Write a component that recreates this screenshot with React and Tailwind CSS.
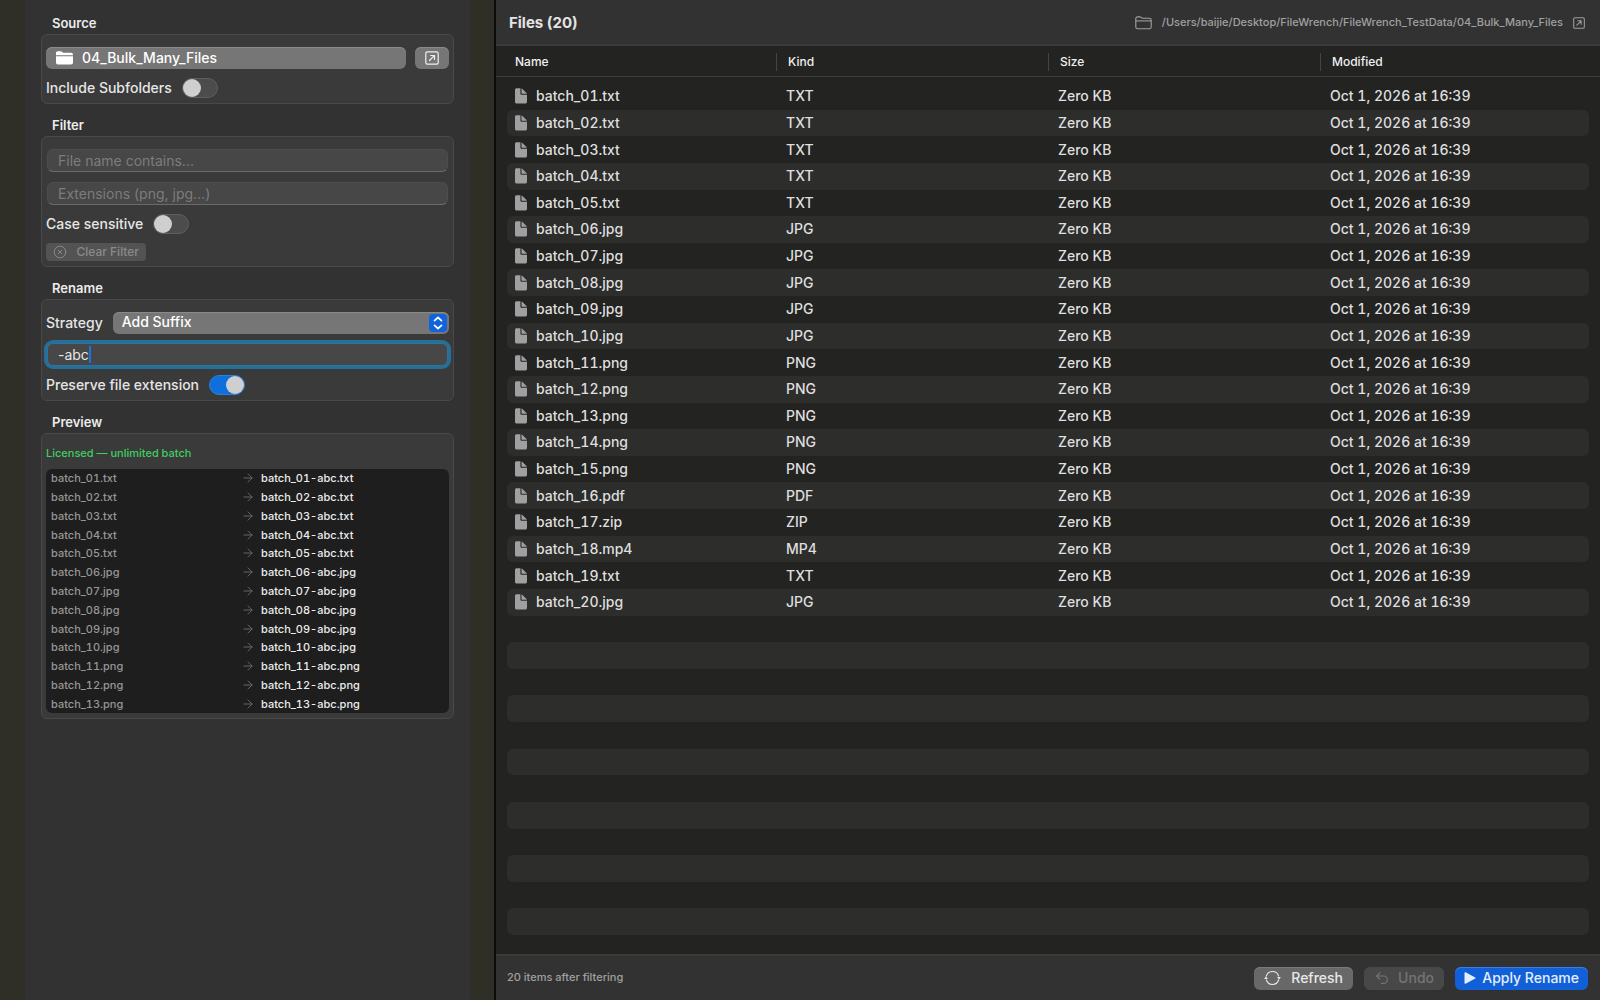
import React, { useState } from "react";
import { ArrowRight, Undo2, CircleX } from "lucide-react";

const exts = [
  "txt", "txt", "txt", "txt", "txt",
  "jpg", "jpg", "jpg", "jpg", "jpg",
  "png", "png", "png", "png", "png",
  "pdf", "zip", "mp4", "txt", "jpg",
];

const files = exts.map((ext, i) => ({
  base: "batch_" + String(i + 1).padStart(2, "0"),
  ext,
  size: "Zero KB",
  modified: "Oct 1, 2026 at 16:39",
}));

// empty striped rows under the list
const emptyRows = Array.from({ length: 12 });

function FolderFill() {
  return (
    <svg width="17" height="14" viewBox="0 0 17 14" fill="currentColor">
      <path d="M0 4.2V2.2C0 1 .8.3 2 .3h2.6c.7 0 1.1.2 1.6.6l.6.5c.4.3.7.4 1.2.4H15c1.2 0 2 .8 2 2v.4H0z" />
      <path d="M0 5.2h17v6.2c0 1.3-.8 2-2 2H2c-1.2 0-2-.7-2-2z" />
    </svg>
  );
}

function FolderLine() {
  return (
    <svg width="17" height="14" viewBox="0 0 17 14" fill="none" stroke="currentColor" strokeWidth="1.1">
      <path d="M.8 11V2.6C.8 1.5 1.4.9 2.5.9h2.2c.6 0 1 .1 1.4.5l.5.4c.4.3.7.4 1.2.4h6.6c1.1 0 1.8.6 1.8 1.7V11c0 1.1-.7 1.8-1.8 1.8h-12C1.4 12.8.8 12.1.8 11z" />
      <path d="M.8 4.9h15.400" />
    </svg>
  );
}

function OpenIcon({ size }) {
  return (
    <svg width={size} height={size} viewBox="0 0 14 14" fill="none" stroke="currentColor" strokeWidth="1.2">
      <rect x=".8" y=".8" width="12.4" height="12.4" rx="1.6" />
      <path d="M4.5 9.5l4.800-4.800M5.600 4.500h3.900v3.900" strokeLinecap="round" strokeLinejoin="round" />
    </svg>
  );
}

function FileIcon() {
  return (
    <svg width="12" height="16" viewBox="0 0 12 16" fill="#a0a0a0">
      <path d="M1.8.3h3.600v5c0 1 .5 1.500 1.500 1.500H12v6.900c0 1.200-.6 1.800-1.800 1.800H1.800C.6 15.500 0 14.900 0 13.700V2.100C0 .9.6.3 1.800.3z" />
      <path d="M6.500.4c.4.1.8.4 1.200.8l3.300 3.300c.4.4.7.8.8 1.200H7.100c-.4 0-.6-.2-.6-.6z" />
    </svg>
  );
}

function RefreshIcon() {
  return (
    <svg width="17" height="16" viewBox="0 0 17 16" fill="none" stroke="currentColor" strokeWidth="1.1" strokeLinecap="round">
      <path d="M2.400 6a6.400 6.400 0 0 1 12.200 0M14.600 10a6.400 6.400 0 0 1-12.200 0" />
      <path d="M.1 8.900L2 6.300l1.900 2.600zM13.100 7.100L15 9.700l1.900-2.600z" fill="currentColor" stroke="none" />
    </svg>
  );
}

function UpDownIcon() {
  return (
    <svg width="10" height="14" viewBox="0 0 10 14" fill="none" stroke="currentColor" strokeWidth="1.7" strokeLinecap="round" strokeLinejoin="round">
      <path d="M1.500 4.700L5 1.500l3.500 3.200M1.500 9.300L5 12.500l3.500-3.200" />
    </svg>
  );
}

function Group({ title, children }) {
  return (
    <section className="flex flex-col gap-[3px]">
      <h2 className="pl-[11px] text-[13px] leading-4 font-semibold text-[#ececec]">{title}</h2>
      <div className="flex flex-col gap-[9px] rounded-md border border-[#494949] bg-[#3a3a3a] px-1 pt-3 pb-[5px]">
        {children}
      </div>
    </section>
  );
}

function Toggle({ label, checked, onChange }) {
  return (
    <label className="flex h-5 items-center gap-[10px] self-start text-[#e6e6e6]">
      {label}
      <input
        type="checkbox"
        role="switch"
        checked={checked}
        onChange={(e) => onChange(e.target.checked)}
        className="flex h-5 w-9 appearance-none items-center rounded-full border border-[#5e5e5e] bg-[#4c4c4c] before:block before:size-[18px] before:rounded-full before:bg-[#cfcfcf] checked:justify-end checked:border-[#2f80d8] checked:bg-[#0f6fdc]"
      />
    </label>
  );
}

const fieldClass =
  "block h-[23px] w-full rounded-md border px-[10px] bg-[#474747] font-normal text-[#e6e6e6] placeholder:text-[#7c7c7c] outline-none";
const fieldIdle = " border-[#4d4d4d] border-b-[#6a6a6a]";
const fieldFocus = " border-[#2a759f] ring-[3px] ring-[#266f99]";

export default function App() {
  const [subfolders, setSubfolders] = useState(false);
  const [nameFilter, setNameFilter] = useState("");
  const [extFilter, setExtFilter] = useState("");
  const [caseSensitive, setCaseSensitive] = useState(false);
  const [suffix, setSuffix] = useState("-abc");
  const [keepExt, setKeepExt] = useState(true);

  const renamed = (f) => (keepExt ? f.base + suffix + "." + f.ext : f.base + "." + f.ext + suffix);

  return (
    <div className="flex h-screen bg-[#232321] font-['Inter',sans-serif] text-sm text-[#dfdfdf]">
      {/* SIDEBAR */}
      <aside className="w-[496px] shrink-0 border-r-2 border-[#0c0c0c] bg-[#302f27] pr-6 pl-[25px] font-medium">
        <div className="flex h-full flex-col gap-[13px] bg-[#323232] px-4 pt-[15px]">
          <Group title="Source">
            <div className="flex gap-[9px]">
              <button className="flex h-[22px] flex-1 items-center gap-[9px] rounded-md bg-[#767676] px-[10px] text-white inset-shadow-[0_1px_#8a8a8a]">
                <FolderFill />
                04_Bulk_Many_Files
              </button>
              <button aria-label="Open folder" className="flex h-[22px] w-[34px] items-center justify-center rounded-md bg-[#767676] text-[#f0f0f0] inset-shadow-[0_1px_#8a8a8a]">
                <OpenIcon size={14} />
              </button>
            </div>
            <Toggle label="Include Subfolders" checked={subfolders} onChange={setSubfolders} />
          </Group>

          <Group title="Filter">
            <div className="flex flex-col gap-[10px] px-px">
              <input aria-label="File name contains" placeholder="File name contains..." value={nameFilter} onChange={(e) => setNameFilter(e.target.value)} className={fieldClass + fieldIdle} />
              <input aria-label="Extensions" placeholder="Extensions (png, jpg...)" value={extFilter} onChange={(e) => setExtFilter(e.target.value)} className={fieldClass + fieldIdle} />
            </div>
            <Toggle label="Case sensitive" checked={caseSensitive} onChange={setCaseSensitive} />
            <button disabled className="flex h-[18px] w-[100px] items-center justify-between self-start rounded bg-[#535353] px-[7px] text-xs text-[#8a8a8a]">
              <CircleX size={14} strokeWidth={1.6} />
              Clear Filter
            </button>
          </Group>

          <Group title="Rename">
            <div className="flex items-center gap-[10px]">
              <label htmlFor="strategy" className="text-[#e6e6e6]">Strategy</label>
              <div className="relative flex-1">
                <select id="strategy" className="block h-[22px] w-full appearance-none rounded-md bg-[#767676] px-[9px] pb-[2px] text-sm leading-5 text-white inset-shadow-[0_1px_#8a8a8a]">
                  <option>Add Suffix</option>
                </select>
                <span className="pointer-events-none absolute top-[2px] right-[2px] flex size-[18px] items-center justify-center rounded bg-[#1163dc] text-white">
                  <UpDownIcon />
                </span>
              </div>
            </div>
            <div className="relative px-px">
              <input aria-label="Suffix" value={suffix} onChange={(e) => setSuffix(e.target.value)} className={fieldClass + fieldFocus} />
              <span className="pointer-events-none absolute top-[3px] left-[43px] h-[17px] w-[2px] bg-[#1675e0]" />
            </div>
            <Toggle label="Preserve file extension" checked={keepExt} onChange={setKeepExt} />
          </Group>

          <Group title="Preview">
            <p className="text-[11px] leading-[14px] text-[#3fce60]">Licensed — unlimited batch</p>
            <ul className="grid h-[244px] auto-rows-fr overflow-hidden rounded-md bg-[#1e1e1e] px-[5px] text-[11px] leading-4 tabular-nums">
              {files.slice(0, 13).map((f) => (
                <li key={f.base} className="flex items-center">
                  <span className="w-[190px] text-[#969696]">{f.base + "." + f.ext}</span>
                  <ArrowRight size={14} strokeWidth={1.6} className="mr-[6px] text-[#6a6a6a]" />
                  <span className="text-[#ececec]">{renamed(f)}</span>
                </li>
              ))}
            </ul>
          </Group>
        </div>
      </aside>

      {/* FILES */}
      <main className="flex min-w-0 flex-1 flex-col">
        <header className="flex h-[46px] shrink-0 items-center border-b-2 border-[#3b3b3b] bg-[#323232] pt-[2px] pr-[15px] pl-[13px]">
          <h1 className="flex-1 text-[15px] font-bold text-[#e4e4e4]">Files ({files.length})</h1>
          <div className="flex items-center gap-[10px] text-[11px] font-medium text-[#a0a0a0]">
            <FolderLine />
            <span>/Users/baijie/Desktop/FileWrench/FileWrench_TestData/04_Bulk_Many_Files</span>
            <a href="#open" aria-label="Show in Finder"><OpenIcon size={12} /></a>
          </div>
        </header>

        <table className="flex min-h-0 flex-1 flex-col">
          <thead className="block border-b border-[#3d3d3d] px-2 pt-[7px] pb-[5px]">
            <tr className="grid grid-cols-4 text-left text-xs leading-[18px] text-[#f0f0f0]">
              <th className="pl-[11px] font-medium">Name</th>
              <th className="border-l border-[#444444] pl-[11px] font-medium">Kind</th>
              <th className="border-l border-[#444444] pl-[11px] font-medium">Size</th>
              <th className="border-l border-[#444444] pl-[11px] font-medium">Modified</th>
            </tr>
          </thead>
          <tbody className="grid flex-1 auto-rows-fr px-[11px] pt-[6px] pb-[19px] font-medium tabular-nums">
            {files.map((f) => (
              <tr key={f.base} className="grid grid-cols-[269fr_272fr_272fr_269fr] items-center rounded-md even:bg-[#2d2d2c]">
                <td className="flex items-center gap-[9px] pl-2">
                  <FileIcon />
                  {f.base + "." + f.ext}
                </td>
                <td className="pl-[10px]">{f.ext.toUpperCase()}</td>
                <td className="pl-[10px]">{f.size}</td>
                <td className="pl-[10px]">{f.modified}</td>
              </tr>
            ))}
            {emptyRows.map((_, i) => (
              <tr key={i} className="block rounded-md even:bg-[#2d2d2c]" />
            ))}
          </tbody>
        </table>

        <footer className="flex h-[46px] shrink-0 items-center gap-[11px] border-t-2 border-[#3b3b3b] bg-[#323232] pr-3 pl-[11px] font-medium">
          <p className="flex-1 text-[11px] text-[#a0a0a0]">{files.length} items after filtering</p>
          <button className="flex h-[23px] w-[99px] items-center justify-between rounded-md bg-[#686868] px-[10px] text-[#e8e8e8] inset-shadow-[0_1px_#7a7a7a]">
            <RefreshIcon />
            Refresh
          </button>
          <button disabled className="flex h-[23px] w-20 items-center justify-between rounded-md bg-[#484848] px-[10px] text-[#747474]">
            <Undo2 size={16} strokeWidth={1.7} />
            Undo
          </button>
          <button className="flex h-[23px] w-[133px] items-center justify-between rounded-md bg-[#1160d8] px-[9px] text-[#e4eefc] inset-shadow-[0_1px_#3a7fe6]">
            <svg width="12" height="12" viewBox="0 0 12 12" fill="currentColor">
              <path d="M.5 1c0-.7.5-1 1.100-.7l9.600 5.100c.6.3.6.9 0 1.200l-9.600 5.100C1 12 .5 11.700.5 11z" />
            </svg>
            Apply Rename
          </button>
        </footer>
      </main>
    </div>
  );
}
